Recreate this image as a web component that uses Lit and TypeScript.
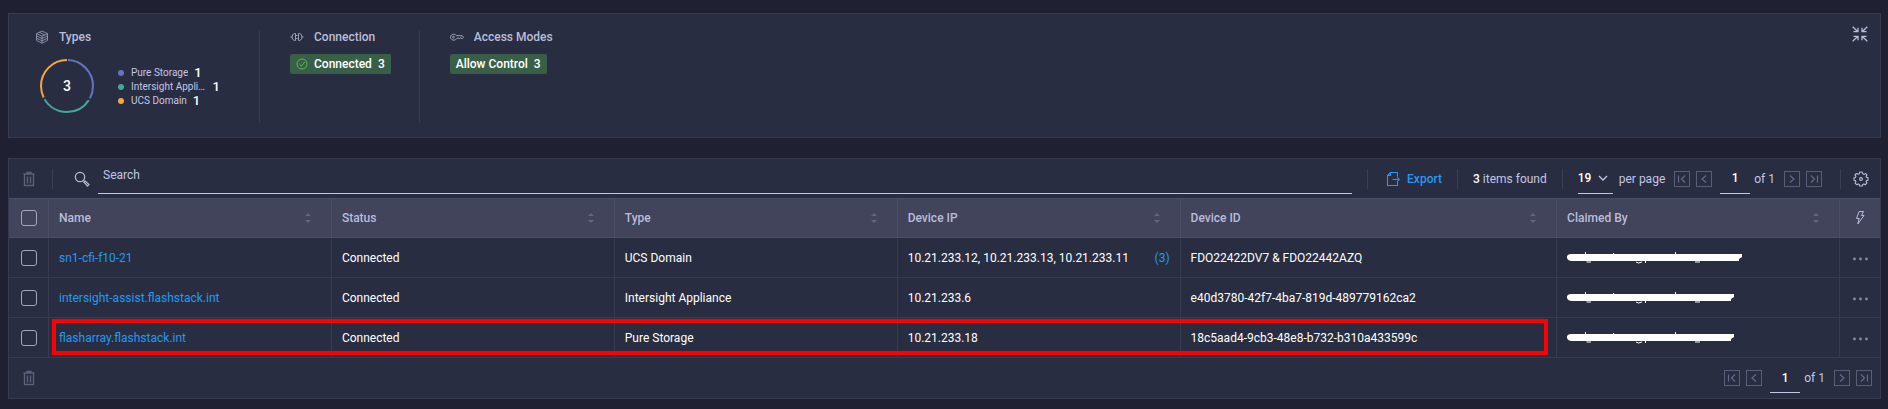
import { LitElement, html, css, svg } from "lit";
import { customElement, property } from "lit/decorators.js";

type Kind = { name: string; count: number; color: string };
type Target = {
  name: string;
  status: string;
  type: string;
  ips: string;
  ipCount?: number;
  deviceId: string;
  maskWidth: number;
  highlighted?: boolean;
};

const KINDS: Kind[] = [
  { name: "Pure Storage", count: 1, color: "#6473c4" },
  { name: "Intersight Appliance", count: 1, color: "#3fa99a" },
  { name: "UCS Domain", count: 1, color: "#fba63c" },
];

const COLUMNS = ["Name", "Status", "Type", "Device IP", "Device ID", "Claimed By"];

const TARGETS: Target[] = [
  {
    name: "sn1-cfi-f10-21",
    status: "Connected",
    type: "UCS Domain",
    ips: "10.21.233.12, 10.21.233.13, 10.21.233.11",
    ipCount: 3,
    deviceId: "FDO22422DV7 & FDO22442AZQ",
    maskWidth: 175,
  },
  {
    name: "intersight-assist.flashstack.int",
    status: "Connected",
    type: "Intersight Appliance",
    ips: "10.21.233.6",
    deviceId: "e40d3780-42f7-4ba7-819d-489779162ca2",
    maskWidth: 167,
  },
  {
    name: "flasharray.flashstack.int",
    status: "Connected",
    type: "Pure Storage",
    ips: "10.21.233.18",
    deviceId: "18c5aad4-9cb3-48e8-b732-b310a433599c",
    maskWidth: 167,
    highlighted: true,
  },
];

const icons = {
  cube: svg`<svg width="14" height="14" viewBox="0 0 14 14" fill="none" stroke="currentColor" stroke-width=".8" stroke-linejoin="round"><path d="M7 1 12.500 3.600 7 6.200 1.500 3.600ZM1.500 3.600V10.400L7 13.200 12.500 10.400V3.600M1.500 5.900 7 8.500 12.500 5.900M1.500 8.200 7 10.800 12.500 8.200M7 6.200V13.200M4.200 2.300 9.800 4.900"/></svg>`,
  plug: svg`<svg width="14" height="14" viewBox="0 0 14 14" fill="none" stroke="currentColor"><path d="M5.500 3.500H4.500Q2 4 2 7t2.500 3.500h1ZM.5 7H2M5.500 5.500H7.500M5.500 8.500H7.500M8.500 3.500H9.500Q12 4 12 7t-2.500 3.500h-1ZM12 7h1.500"/></svg>`,
  key: svg`<svg width="14" height="14" viewBox="0 0 14 14" fill="none" stroke="currentColor"><path d="M6.500 5.700A3.200 3 0 1 0 6.500 8.700L8 7.900 9.300 8.600 10.500 7.900 12.300 8.600 13.500 7.200 12.300 5.700Z"/><circle cx="3.500" cy="7.200" r=".9"/></svg>`,
  check: svg`<svg width="12" height="12" viewBox="0 0 12 12" fill="none" stroke="currentColor"><circle cx="6" cy="6" r="5"/><path d="M3.500 6.200 5.400 8 8.600 4.200"/></svg>`,
  collapse: svg`<svg width="16" height="16" viewBox="0 0 16 16" fill="none" stroke="currentColor" stroke-width="1.300"><path d="M.7.700 5.300 5.300M6 1.700V5.700H1.500M15.300.700 10.700 5.300M10 1.700V5.700H14.500M.7 15.300 5.300 10.700M6 14.300V10.300H1.500M15.300 15.300 10.700 10.700M10 14.300V10.300H14.500"/></svg>`,
  trash: svg`<svg width="12" height="16" viewBox="0 0 12 16" fill="none" stroke="currentColor"><path d="M.5 3H11.500M4 2.500V1.500H8V2.500M1.500 3.500V14.500H10.500V3.500M4.500 5.500V12.500M7.500 5.500V12.500" stroke-width="1.400"/></svg>`,
  search: svg`<svg width="16" height="16" viewBox="0 0 16 16" fill="none" stroke="currentColor" stroke-width="1.200"><circle cx="6" cy="6" r="4.700"/><path d="M9.300 9.300 10.400 10.400"/><path d="M10 11.200 11.200 10 15 13.500 13.600 15Z"/></svg>`,
  exportFile: svg`<svg width="14" height="16" viewBox="0 0 14 16" fill="none" stroke="currentColor" stroke-width="1.100"><path d="M11.500 5.500V1.500H4.500L1.500 4.500V14.500H11.500V11M4.500 1.500V4.500H1.500M6.500 8.500H13M11 6 13.300 8.500 11 11"/></svg>`,
  chevron: svg`<svg width="10" height="6" viewBox="0 0 10 6" fill="none" stroke="currentColor" stroke-width="1.300"><path d="M1 1 5 5 9 1"/></svg>`,
  gear: svg`<svg width="16" height="16" viewBox="0 0 16 16" fill="none" stroke="currentColor" stroke-width="1.100" stroke-linejoin="round"><path d="M6.700 1H9.300L9.700 2.800 11.200 3.400 12.700 2.500 14 3.900 13.100 5.400 13.600 6.400 15 6.800V9.200L13.500 9.600 13.100 10.700 13.900 12.100 12.300 13.700 10.900 12.900 9.700 13.400 9.300 15H6.700L6.300 13.400 5.100 12.900 3.700 13.700 2.100 12.100 2.900 10.700 2.500 9.600 1 9.200V6.800L2.500 6.400 2.900 5.400 2 3.900 3.400 2.500 4.900 3.300 6.300 2.800Z"/><circle cx="8" cy="8" r="1.400"/></svg>`,
  bolt: svg`<svg width="10" height="16" viewBox="0 0 10 16" fill="none" stroke="currentColor" stroke-linejoin="round"><path d="M4.200 1.500H8.500L6.500 5.500H9L2.800 14 4.200 8.500H1.500Z"/></svg>`,
  dots: svg`<svg width="16" height="4" viewBox="0 0 16 4" fill="currentColor"><circle cx="2.500" cy="2" r="1.400"/><circle cx="8.500" cy="2" r="1.400"/><circle cx="14.500" cy="2" r="1.400"/></svg>`,
  sort: svg`<svg width="6" height="10" viewBox="0 0 6 10" fill="currentColor"><path d="M0 3 3 0 6 3ZM0 7 3 10 6 7Z"/></svg>`,
};

const arrows: Record<string, string> = {
  first: "M4.500 4.500V11.500M11 4.500 7.500 8 11 11.500",
  previous: "M10 4.500 6 8 10 11.500",
  next: "M6 4.500 10 8 6 11.500",
  last: "M11.500 4.500V11.500M5 4.500 8.500 8 5 11.500",
};

const shared = css`
  * { box-sizing: border-box; }
  svg { display: block; flex: none; }
  button, input, select { margin: 0; padding: 0; border: 0; background: none; color: inherit; font: inherit; outline: none; }
  button { display: flex; align-items: center; justify-content: center; cursor: pointer; }
`;

@customElement("page-nav")
class PageNav extends LitElement {
  static styles = [
    shared,
    css`
      :host { display: flex; align-items: center; height: 100%; }
      .step { width: 16px; height: 16px; border: 1px solid #595d78; color: #666a88; }
      .step + .step { margin-left: 6px; }
      .page { width: 30px; height: 30px; margin: 0 4px 0 8px; border-bottom: 1px solid #c3c6e6; color: #fff; text-align: center; font-weight: 500; }
      .total { margin-right: 9px; }
    `,
  ];

  private step(name: string) {
    return html`<button class="step" aria-label="${name} page">
      <svg width="14" height="14" viewBox="1 1 14 14" fill="none" stroke="currentColor" stroke-width="1.200"><path d=${arrows[name]} /></svg>
    </button>`;
  }

  render() {
    return html`${this.step("first")}${this.step("previous")}
      <input class="page" aria-label="Page number" value="1" />
      <span class="total">of 1</span>
      ${this.step("next")}${this.step("last")}`;
  }
}

@customElement("type-donut")
class TypeDonut extends LitElement {
  @property({ attribute: false }) kinds: Kind[] = [];

  static styles = [
    shared,
    css`
      :host { display: grid; place-items: center; }
      .ring, .total { grid-area: 1 / 1; }
      .total { color: #fff; font-size: 14px; font-weight: 500; }
    `,
  ];

  render() {
    const total = this.kinds.reduce((sum, k) => sum + k.count, 0);
    const length = 2 * Math.PI * 26;
    let before = 0;
    return html`<svg class="ring" width="54" height="54" viewBox="0 0 54 54" fill="none" stroke-width="2">
        ${this.kinds.map((k) => {
          const arc = (k.count / total) * length;
          const offset = -before - 1;
          before += arc;
          return svg`<circle cx="27" cy="27" r="26" stroke=${k.color} transform="rotate(-90 27 27)"
            stroke-dasharray="${arc - 2} ${length - arc + 2}" stroke-dashoffset=${offset}></circle>`;
        })}
      </svg>
      <span class="total">${total}</span>`;
  }
}

@customElement("summary-panel")
class SummaryPanel extends LitElement {
  static styles = [
    shared,
    css`
      :host { display: flex; align-items: flex-start; padding: 12px 12px 14px 0; border: 1px solid #383b50; background: #292d41; }
      .group { height: 93px; margin-top: 4px; padding: 0 28px 0 30px; border-right: 1px solid #383b50; }
      .group.types { padding: 0 39px 0 26px; }
      .group.last { border-right: 0; }
      .title { display: flex; align-items: center; gap: 10px; margin: 0; height: 14px; color: #b9bddb; font-size: 12px; font-weight: 500; }
      .badge { display: flex; align-items: center; gap: 6px; height: 20px; margin-top: 10px; padding: 0 6px; border-radius: 2px; background: #3a5f48; color: #fff; font-size: 12px; font-weight: 500; width: fit-content; }
      .badge svg { color: #55bb55; }
      .chart { display: flex; align-items: center; margin: 15px 0 0 5px; }
      .legend { margin: 0 0 0 24px; padding: 2px 0 0; list-style: none; width: 102px; }
      .entry { display: flex; align-items: center; height: 14px; color: #c3c6e6; font-size: 10px; }
      .dot { flex: none; width: 6px; height: 6px; margin-right: 7px; border-radius: 50%; }
      .label { max-width: 79px; overflow: hidden; text-overflow: ellipsis; white-space: nowrap; }
      .count { margin-left: 6px; color: #fff; font-size: 13px; font-weight: 500; line-height: 14px; }
      .collapse { margin: 0 0 0 auto; width: 16px; height: 16px; color: #b9bddb; }
      .group .title svg { color: #9da1bd; }
    `,
  ];

  render() {
    return html`
      <section class="group types">
        <h2 class="title">${icons.cube}Types</h2>
        <div class="chart">
          <type-donut .kinds=${KINDS}></type-donut>
          <ul class="legend">
            ${KINDS.map(
              (k) => html`<li class="entry">
                <span class="dot" style="background:${k.color}"></span><span class="label">${k.name}</span><span class="count">${k.count}</span>
              </li>`
            )}
          </ul>
        </div>
      </section>
      <section class="group">
        <h2 class="title">${icons.plug}Connection</h2>
        <button class="badge">${icons.check}<span>Connected</span><span>3</span></button>
      </section>
      <section class="group last">
        <h2 class="title">${icons.key}Access Modes</h2>
        <button class="badge"><span>Allow Control</span><span>3</span></button>
      </section>
      <button class="collapse" aria-label="Collapse">${icons.collapse}</button>
    `;
  }
}

@customElement("target-table")
class TargetTable extends LitElement {
  static styles = [
    shared,
    css`
      :host { display: block; border: 1px solid #383b50; background: #292d41; }
      .bar { display: flex; align-items: center; height: 39px; }
      .bar.foot { height: 40px; justify-content: space-between; padding-right: 8px; }
      .trash { width: 39px; height: 16px; color: #5b5f79; }
      .rule { flex: none; width: 1px; height: 20px; background: #3b3e54; }
      .trash + .rule { margin-left: 4px; }
      .search { display: flex; align-items: center; flex: 1; margin: 0 15px 0 21px; }
      .search-icon { color: #b9bddb; margin-right: 8px; }
      .query { flex: 1; min-width: 0; height: 30px; padding: 0 5px 6px; border-bottom: 1px solid #c3c6e6; color: #fff; }
      .query::placeholder { color: #c3c6e6; opacity: 1; }
      .export { gap: 7px; margin: 0 15px 0 18px; color: #2599f2; font-weight: 500; }
      .found { margin: 0 15px; }
      .strong { color: #fff; font-weight: 500; }
      .size { display: grid; align-items: center; width: 35px; height: 30px; margin: 0 6px 0 15px; border-bottom: 1px solid #c3c6e6; }
      .size select { grid-area: 1 / 1; appearance: none; width: 100%; color: #fff; font-weight: 500; font-size: 12px; }
      .size svg { grid-area: 1 / 1; justify-self: end; margin-right: 5px; pointer-events: none; }
      .nav { margin: 0 18px 0 9px; }
      .gear { width: 39px; height: 16px; color: #b9bddb; }
      table { width: 100%; table-layout: fixed; border-collapse: separate; border-spacing: 0; }
      .tick-column { width: 39px; }
      .action-column { width: 41px; }
      .column { width: 15.12%; }
      th, td { height: 40px; padding: 0 10px; border-left: 1px solid #383b50; border-bottom: 1px solid #383b50; text-align: left; vertical-align: middle; font-weight: 400; color: #fff; white-space: nowrap; overflow: hidden; text-overflow: ellipsis; }
      th { border-top: 1px solid #4c4e66; border-bottom-color: #4c4e66; border-left-color: #4c4e66; background: #41445a; color: #b9bddb; font-weight: 500; }
      th:first-child, td:first-child { border-left: 0; padding: 0 0 0 12px; }
      th:last-child, td:last-child { padding: 0; }
      .head, .cell { display: flex; align-items: center; justify-content: space-between; }
      .sort { width: 6px; height: 10px; margin-right: 10px; color: #63667f; }
      .center { width: 100%; height: 16px; color: #b9bddb; }
      .more { color: #888ca8; padding-top: 2px; }
      .tick { display: block; appearance: none; width: 16px; height: 16px; border: 1px solid #a3a6bf; border-radius: 3px; }
      .tick:checked { background: #2599f2; }
      a { color: #2599f2; text-decoration: none; }
      .row { position: relative; }
      .frame { position: absolute; top: 1px; bottom: 3px; left: 43px; right: calc(15.12% + 49px); border: 4px solid #ff0000; pointer-events: none; }
    `,
  ];

  private mask(width: number) {
    return html`<svg width=${width} height="14" viewBox="0 0 ${width} 14" role="img" aria-label="Hidden">
      <path fill="#fff" d="M0 5Q1 3 4 3H${width}V6L${width - 3} 8V10H5Q1 10 0 7Z" />
      <path stroke="#fff" fill="none" d="M18.500 1V3M46.500 2V3M108.500 1V3M19.500 11H24M69 11Q71 13 75 11M78.500 10V12M128 11H133" />
    </svg>`;
  }

  private row(t: Target) {
    return html`<tr class="row">
      <td>
        <input class="tick" type="checkbox" aria-label="Select ${t.name}" />
        ${t.highlighted ? html`<div class="frame"></div>` : ""}
      </td>
      <td><a href="#">${t.name}</a></td>
      <td>${t.status}</td>
      <td>${t.type}</td>
      <td><div class="cell"><span>${t.ips}</span>${t.ipCount ? html`<a href="#">(${t.ipCount})</a>` : ""}</div></td>
      <td>${t.deviceId}</td>
      <td>${this.mask(t.maskWidth)}</td>
      <td><button class="center more" aria-label="Actions for ${t.name}">${icons.dots}</button></td>
    </tr>`;
  }

  render() {
    return html`
      <div class="bar">
        <button class="trash" aria-label="Delete">${icons.trash}</button>
        <span class="rule"></span>
        <label class="search">
          <span class="search-icon">${icons.search}</span>
          <input class="query" type="text" placeholder="Search" aria-label="Search" />
        </label>
        <span class="rule"></span>
        <button class="export">${icons.exportFile}Export</button>
        <span class="rule"></span>
        <span class="found"><span class="strong">3</span> items found</span>
        <span class="rule"></span>
        <span class="size">
          <select id="size"><option>19</option></select>
          ${icons.chevron}
        </span>
        <label for="size">per page</label>
        <page-nav class="nav"></page-nav>
        <span class="rule"></span>
        <button class="gear" aria-label="Settings">${icons.gear}</button>
      </div>
      <table>
        <colgroup>
          <col class="tick-column" />
          ${COLUMNS.map((c) => html`<col class=${c === "Device ID" ? "" : "column"} />`)}
          <col class="action-column" />
        </colgroup>
        <thead>
          <tr>
            <th><input class="tick" type="checkbox" aria-label="Select all" /></th>
            ${COLUMNS.map(
              (c) => html`<th><div class="head">${c}<button class="sort" aria-label="Sort by ${c}">${icons.sort}</button></div></th>`
            )}
            <th><button class="center" aria-label="Actions">${icons.bolt}</button></th>
          </tr>
        </thead>
        <tbody>
          ${TARGETS.map((t) => this.row(t))}
        </tbody>
      </table>
      <div class="bar foot">
        <button class="trash" aria-label="Delete">${icons.trash}</button>
        <page-nav></page-nav>
      </div>
    `;
  }
}

@customElement("app-root")
class AppRoot extends LitElement {
  static styles = [
    shared,
    css`
      :host {
        display: flex;
        flex-direction: column;
        gap: 20px;
        box-sizing: border-box;
        min-height: 100vh;
        padding: 13px 7px 10px 8px;
        background: #1f2132;
        color: #c3c6e6;
        font: 12px/16px Roboto, "Liberation Sans", sans-serif;
      }
    `,
  ];

  render() {
    return html`<summary-panel></summary-panel><target-table></target-table>`;
  }
}
